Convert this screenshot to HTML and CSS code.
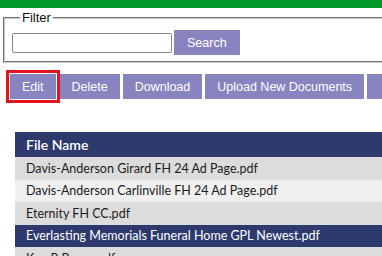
FILE: index.html
```html
<!DOCTYPE html>
<html lang="en">
<head>
  <meta charset="UTF-8">
  <meta name="viewport" content="width=device-width, initial-scale=1.0">
  <title>Documents</title>
  <link rel="stylesheet" href="styles.css">
</head>
<body>
  <div class="top-bar"></div>

  <div class="page">
    <fieldset class="filter-box">
      <legend>Filter</legend>
      <div class="filter-row">
        <input type="text" class="filter-input">
        <button type="button" class="btn">Search</button>
      </div>
    </fieldset>

    <div class="toolbar">
      <button type="button" class="btn btn-active">Edit</button>
      <button type="button" class="btn">Delete</button>
      <button type="button" class="btn">Download</button>
      <button type="button" class="btn">Upload New Documents</button>
      <button type="button" class="btn btn-wide">Move</button>
    </div>

    <table class="doc-table">
      <thead>
        <tr><th>File Name</th></tr>
      </thead>
      <tbody>
        <tr><td>Davis-Anderson Girard FH 24 Ad Page.pdf</td></tr>
        <tr><td>Davis-Anderson Carlinville FH 24 Ad Page.pdf</td></tr>
        <tr><td>Eternity FH CC.pdf</td></tr>
        <tr class="selected"><td>Everlasting Memorials Funeral Home GPL Newest.pdf</td></tr>
        <tr><td>Ken R Byrne.pdf</td></tr>
      </tbody>
    </table>
  </div>
</body>
</html>
```

FILE: styles.css
```css
*{margin: 0; padding: 0; box-sizing: border-box;}

html,body{
  width: 100%;
  overflow: hidden;
  background-color: white;
  font-family: "Liberation Sans", Arial, sans-serif;
}

.top-bar{
  height: 8px;
  background-color: #009a29;
}

.page{
  width: 720px;
}

.filter-box{
  margin: 2px 0 0 3px;
  padding: 5px 8px 6px 7px;
  border: 2px groove #c8c8c8;
}
.filter-box legend{
  margin-left: 8px;
  padding: 0 2px;
  font-size: 13px;
  color: #111;
}
.filter-row{
  display: flex;
  align-items: center;
  gap: 2px;
}
.filter-input{
  width: 160px;
  height: 20px;
  border: 1px solid #8a8a8a;
  border-radius: 2px;
}

.btn{
  height: 25px;
  padding: 0 12px;
  border: none;
  background-color: #8784c0;
  color: white;
  font-family: "Liberation Sans", Arial, sans-serif;
  font-size: 12.5px;
  cursor: pointer;
}
.filter-row .btn{
  padding: 0 13px;
}
.btn-wide{
  padding: 0 16px;
}

.toolbar{
  display: flex;
  gap: 3px;
  margin: 11px 0 0 10px;
}
.btn-active{
  outline: 3px solid #e3141c;
  outline-offset: 1px;
  margin-right: 1px;
}

.doc-table{
  margin: 33px 0 0 15px;
  width: 700px;
  border-collapse: collapse;
  font-family: Lato, "Liberation Sans", sans-serif;
  font-size: 12.5px;
}
.doc-table th{
  height: 25px;
  padding: 0 11px;
  text-align: left;
  background-color: #2e3a6e;
  color: white;
  font-size: 14px;
  font-weight: 600;
}
.doc-table td{
  height: 22.5px;
  padding: 0 11px;
  color: #1c1c1c;
}
.doc-table tbody tr:nth-child(odd){
  background-color: #dcdcdc;
}
.doc-table tbody tr:nth-child(even){
  background-color: #efefef;
}
.doc-table tbody tr.selected{
  background-color: #2e3a6e;
}
.doc-table tr.selected td{
  color: white;
}
```
